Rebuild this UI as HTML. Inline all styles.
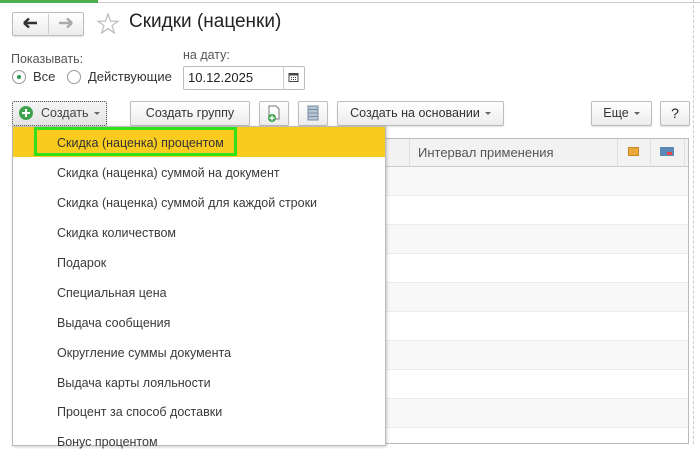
<!DOCTYPE html>
<html><head><meta charset="utf-8"><style>
*{box-sizing:border-box;margin:0;padding:0}
body{width:700px;height:444px;overflow:hidden;background:#fff;font-family:"Liberation Sans",Arial,sans-serif;font-size:12.5px;color:#333;position:relative}
.a{position:absolute}
.btn{position:absolute;height:25px;border:1px solid #bdbdbd;border-radius:2px;background:linear-gradient(#fff,#ececec);font-size:12.5px;color:#333;text-align:center;line-height:23px;box-shadow:0 1px 1px rgba(0,0,0,.12)}
.caret{display:inline-block;border-left:3px solid transparent;border-right:3px solid transparent;border-top:3px solid #666;vertical-align:middle;margin-left:5px}
.row{position:absolute;left:385px;width:303px;height:29px;border-bottom:1px solid #ececec}
.mi{position:absolute;left:57px;font-size:12.5px;color:#3a3a3a}
</style></head><body>
<div class="a" style="left:0;top:0;width:98px;height:3px;background:#4caf50"></div>
<div class="a" style="left:98px;top:2px;width:602px;height:1px;background:#ccc"></div>
<div class="a" style="left:693px;top:0;width:0;height:444px;border-left:1px dashed #ccc"></div>
<!-- nav -->
<div class="btn" style="left:12px;top:12px;width:72px;height:24px"></div>
<div class="a" style="left:48px;top:14px;width:1px;height:20px;background:#ccc"></div>
<svg class="a" style="left:22px;top:16px" width="16" height="14"><path d="M2 7H15M2 7L7 2.5M2 7L7 11.5" stroke="#333" stroke-width="2.5" fill="none"/></svg>
<svg class="a" style="left:58px;top:16px" width="16" height="14"><path d="M1 7H14M14 7L9 2.5M14 7L9 11.5" stroke="#aaa" stroke-width="2.5" fill="none"/></svg>
<svg class="a" style="left:96px;top:12px" width="24" height="24"><path d="M12 2L14.6 9.2H22L16 13.7L18.3 21L12 16.5L5.7 21L8 13.7L2 9.2H9.4Z" fill="none" stroke="#bbb" stroke-width="1.2"/></svg>
<div class="a" style="left:129px;top:11px;font-size:19px;color:#222">Скидки (наценки)</div>
<div class="a" style="left:11px;top:52px;color:#555">Показывать:</div>
<div class="a" style="left:183px;top:48px;color:#555">на дату:</div>
<div class="a" style="left:12px;top:70px;width:14px;height:14px;border:1px solid #999;border-radius:50%;background:#fff"></div>
<div class="a" style="left:17px;top:75px;width:4px;height:4px;border-radius:50%;background:#2e9e50"></div>
<div class="a" style="left:33px;top:69px;color:#333;font-size:13px">Все</div>
<div class="a" style="left:67px;top:70px;width:14px;height:14px;border:1px solid #999;border-radius:50%"></div>
<div class="a" style="left:88px;top:69px;color:#333;font-size:13px">Действующие</div>
<div class="a" style="left:183px;top:66px;width:122px;height:24px;border:1px solid #bbb;border-radius:2px"></div>
<div class="a" style="left:283px;top:66px;width:1px;height:24px;background:#ccc"></div>
<div class="a" style="left:188px;top:70px;font-size:13px;color:#222">10.12.2025</div>
<svg class="a" style="left:288px;top:72px" width="11" height="11"><rect x="1" y="1.5" width="9" height="8" fill="none" stroke="#444"/><rect x="1" y="1.5" width="9" height="2" fill="#444"/><path d="M3 5.5h1M5 5.5h1M7 5.5h1M3 7.5h1M5 7.5h1M7 7.5h1" stroke="#444"/></svg>
<!-- toolbar -->
<div class="btn" style="left:12px;top:101px;width:95px;border:1px dotted #555;background:linear-gradient(#f5f5f5,#e4e4e4)"></div>
<div class="a" style="left:19px;top:106px;width:14px;height:14px;border-radius:50%;background:#3fa34d"></div>
<div class="a" style="left:25px;top:109px;width:2px;height:8px;background:#fff"></div>
<div class="a" style="left:22px;top:112px;width:8px;height:2px;background:#fff"></div>
<div class="a" style="left:41px;top:106px;color:#444">Создать<span class="caret"></span></div>
<div class="btn" style="left:130px;top:101px;width:120px">Создать группу</div>
<div class="btn" style="left:259px;top:101px;width:30px"></div>
<svg class="a" style="left:266px;top:104px" width="16" height="19"><path d="M3 2H10L13 5V15H3Z" fill="#fff" stroke="#777"/><circle cx="6" cy="14" r="4" fill="#3fa34d"/><path d="M6 11.5v5M3.5 14h5" stroke="#fff" stroke-width="1.4"/></svg>
<div class="btn" style="left:298px;top:101px;width:30px"></div>
<svg class="a" style="left:307px;top:105px" width="12" height="16"><rect x="1" y="1" width="10" height="14" fill="#b8c6d4" stroke="#7a8ea3"/><path d="M1 4.5h10M1 8h10M1 11.5h10" stroke="#7a8ea3"/></svg>
<div class="btn" style="left:337px;top:101px;width:167px">Создать на основании<span class="caret"></span></div>
<div class="btn" style="left:591px;top:101px;width:61px">Еще<span class="caret"></span></div>
<div class="btn" style="left:660px;top:101px;width:30px;font-size:14px;color:#222">?</div>
<!-- table -->
<div class="row" style="top:167px;background:#f8f8f8"></div>
<div class="row" style="top:196px"></div>
<div class="row" style="top:225px;background:#f8f8f8"></div>
<div class="row" style="top:254px"></div>
<div class="row" style="top:283px;background:#f8f8f8"></div>
<div class="row" style="top:312px"></div>
<div class="row" style="top:341px;background:#f8f8f8"></div>
<div class="row" style="top:370px"></div>
<div class="row" style="top:399px;background:#f8f8f8"></div>
<div class="a" style="left:385px;top:138px;width:304px;height:306px;border:1px solid #bbb;border-left:none"></div>
<div class="a" style="left:385px;top:139px;width:303px;height:28px;background:#f2f2f2;border-bottom:1px solid #ccc"></div>
<div class="a" style="left:409px;top:139px;width:1px;height:28px;background:#ddd"></div>
<div class="a" style="left:617px;top:139px;width:1px;height:28px;background:#ddd"></div>
<div class="a" style="left:650px;top:139px;width:1px;height:28px;background:#ddd"></div>
<div class="a" style="left:684px;top:139px;width:1px;height:28px;background:#ddd"></div>
<div class="a" style="left:418px;top:145px;color:#555;font-size:13px">Интервал применения</div>
<div class="a" style="left:628px;top:147px;width:11px;height:9px;background:#e9a93a;border:1px solid #c8862a"></div>
<div class="a" style="left:660px;top:147px;width:14px;height:9px;background:#5b88b5"><div style="position:absolute;right:2px;bottom:1px;width:5px;height:3px;background:#e44"></div></div>
<!-- menu -->
<div class="a" style="left:12px;top:126px;width:374px;height:320px;background:#fff;border:1px solid #bbb;box-shadow:1px 1px 3px rgba(0,0,0,.2)"></div>
<div class="a" style="left:13px;top:127px;width:372px;height:30px;background:#f8cb1e"></div>
<div class="a" style="left:34px;top:127px;width:203px;height:29px;border:3px solid #2fe01a"></div>
<div class="mi" style="top:136px;color:#333">Скидка (наценка) процентом</div>
<div class="mi" style="top:166px">Скидка (наценка) суммой на документ</div>
<div class="mi" style="top:196px">Скидка (наценка) суммой для каждой строки</div>
<div class="mi" style="top:226px">Скидка количеством</div>
<div class="mi" style="top:256px">Подарок</div>
<div class="mi" style="top:286px">Специальная цена</div>
<div class="mi" style="top:316px">Выдача сообщения</div>
<div class="mi" style="top:346px">Округление суммы документа</div>
<div class="mi" style="top:376px">Выдача карты лояльности</div>
<div class="mi" style="top:405px">Процент за способ доставки</div>
<div class="mi" style="top:435px">Бонус процентом</div>
</body></html>
